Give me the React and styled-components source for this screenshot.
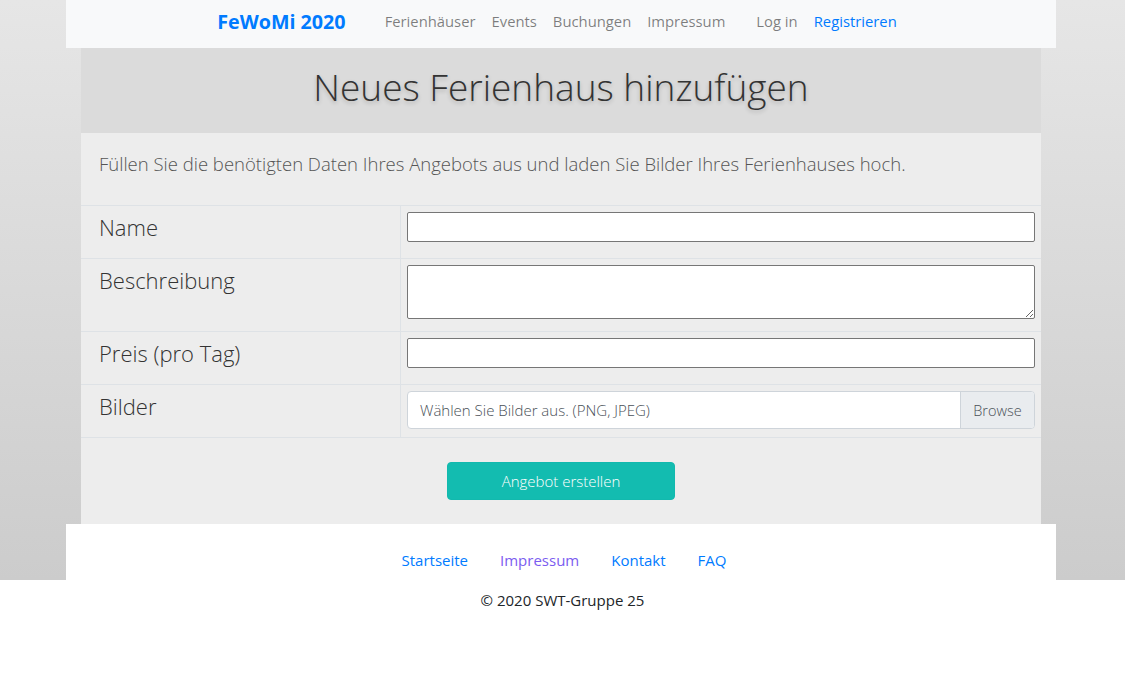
import styled, { createGlobalStyle } from 'styled-components';

const GlobalStyle = createGlobalStyle`
  html, body {
    margin: 0;
    padding: 0;
    background: #fff;
    font-family: "Open Sans", "Liberation Sans", sans-serif;
    color: #212529;
  }
`;

// Grey gradient band behind the container, ends with the footer links
const Backdrop = styled.div`
  background: linear-gradient(#e6e6e6, #cccccc);
  padding-right: 3px;
`;

const Container = styled.div`
  width: 990px;
  margin: 0 auto;
`;

const Navbar = styled.nav`
  height: 48px;
  box-sizing: border-box;
  padding: 0 0 6px 0;
  background: #f8f9fa;
  display: flex;
  align-items: center;
  justify-content: center;
`;

const Brand = styled.a`
  font-size: 19.7px;
  font-weight: 700;
  color: #007bff;
  margin-right: 31px;
  text-decoration: none;
`;

const NavList = styled.div`
  display: flex;
  margin-right: ${(p) => p.$gap || 0}px;
`;

const NavLink = styled.a`
  font-size: 14.8px;
  font-weight: 400;
  padding: 0 8px;
  color: ${(p) => (p.$active ? '#007bff' : 'rgba(0, 0, 0, 0.5)')};
  text-decoration: none;
`;

const Main = styled.main`
  margin: 0 15px;
`;

const Header = styled.header`
  height: 85px;
  box-sizing: border-box;
  padding-bottom: 8px;
  background: #dbdbdb;
  display: flex;
  align-items: center;
  justify-content: center;
`;

const Title = styled.h1`
  margin: 0;
  font-size: 37px;
  font-weight: 300;
  color: #333;
  text-shadow: 0 2px 4px rgba(0, 0, 0, 0.2);
`;

const Body = styled.section`
  background: #ededed;
`;

const Lead = styled.p`
  margin: 0;
  padding: 18px 18px 28px;
  font-size: 18.5px;
  font-weight: 300;
  line-height: 26px;
  color: #555;
`;

const FormTable = styled.div`
  display: grid;
  grid-template-columns: 320px 1fr;
  border-bottom: 1px solid #dee2e6;
`;

const LabelCell = styled.div`
  border-top: 1px solid #dee2e6;
  border-right: 1px solid #dee2e6;
  padding: 6px 18px 0;
  font-size: 22px;
  font-weight: 300;
  line-height: 30px;
  color: #333;
`;

const FieldCell = styled.div`
  border-top: 1px solid #dee2e6;
  padding: 6px 6px 16px;
`;

const TextInput = styled.input`
  display: block;
  box-sizing: border-box;
  width: 100%;
  height: 30px;
  border: 1px solid #767676;
  border-radius: 2px;
  background: #fff;
`;

const TextArea = styled.textarea`
  display: block;
  box-sizing: border-box;
  width: 100%;
  height: 54px;
  border: 1px solid #767676;
  border-radius: 2px;
  background: #fff;
  resize: vertical;
  margin-bottom: -4px;
`;

const FileBox = styled.div`
  display: flex;
  height: 38px;
  box-sizing: border-box;
  border: 1px solid #ced4da;
  border-radius: 4px;
  background: #fff;
  overflow: hidden;
  margin-bottom: -8px;
`;

const FileText = styled.div`
  flex: 1;
  display: flex;
  align-items: center;
  padding: 0 12px;
  font-size: 15px;
  font-weight: 300;
  color: #495057;
`;

const BrowseButton = styled.div`
  width: 73px;
  display: flex;
  align-items: center;
  justify-content: center;
  background: #e9ecef;
  border-left: 1px solid #ced4da;
  font-size: 14.5px;
  font-weight: 300;
  color: #495057;
`;

const Actions = styled.div`
  display: flex;
  justify-content: center;
  padding: 24px 0 24px;
`;

const SubmitButton = styled.button`
  width: 228px;
  height: 38px;
  border: 1px solid #12b9ae;
  border-radius: 4px;
  background: #13bcb0;
  color: #fff;
  font-family: inherit;
  font-size: 15px;
  font-weight: 300;
`;

const FooterBar = styled.footer`
  height: 56px;
  background: #fff;
  display: flex;
  justify-content: center;
  align-items: flex-end;
  gap: 32px;
  padding: 0 0 10px 6px;
  box-sizing: border-box;
`;

const FooterLink = styled.a`
  font-size: 15px;
  font-weight: 400;
  color: ${(p) => (p.$visited ? '#7b5cf0' : '#007bff')};
  text-decoration: none;
`;

const Copyright = styled.p`
  margin: 0;
  padding-top: 10px;
  text-align: center;
  font-size: 15px;
  color: #212529;
`;

export default function App() {
  return (
    <>
      <GlobalStyle />
      <Backdrop>
        <Container>
          <Navbar>
            <Brand>FeWoMi 2020</Brand>
            <NavList $gap={15}>
              <NavLink>Ferienhäuser</NavLink>
              <NavLink>Events</NavLink>
              <NavLink>Buchungen</NavLink>
              <NavLink>Impressum</NavLink>
            </NavList>
            <NavList>
              <NavLink>Log in</NavLink>
              <NavLink $active>Registrieren</NavLink>
            </NavList>
          </Navbar>
          <Main>
            <Header>
              <Title>Neues Ferienhaus hinzufügen</Title>
            </Header>
            <Body>
              <Lead>
                Füllen Sie die benötigten Daten Ihres Angebots aus und laden Sie Bilder Ihres
                Ferienhauses hoch.
              </Lead>
              <FormTable>
                <LabelCell>Name</LabelCell>
                <FieldCell>
                  <TextInput type="text" />
                </FieldCell>
                <LabelCell>Beschreibung</LabelCell>
                <FieldCell>
                  <TextArea />
                </FieldCell>
                <LabelCell>Preis (pro Tag)</LabelCell>
                <FieldCell>
                  <TextInput type="text" />
                </FieldCell>
                <LabelCell>Bilder</LabelCell>
                <FieldCell>
                  <FileBox>
                    <FileText>Wählen Sie Bilder aus. (PNG, JPEG)</FileText>
                    <BrowseButton>Browse</BrowseButton>
                  </FileBox>
                </FieldCell>
              </FormTable>
              <Actions>
                <SubmitButton type="button">Angebot erstellen</SubmitButton>
              </Actions>
            </Body>
          </Main>
          <FooterBar>
            <FooterLink>Startseite</FooterLink>
            <FooterLink $visited>Impressum</FooterLink>
            <FooterLink>Kontakt</FooterLink>
            <FooterLink>FAQ</FooterLink>
          </FooterBar>
        </Container>
      </Backdrop>
      <Copyright>© 2020 SWT-Gruppe 25</Copyright>
    </>
  );
}
